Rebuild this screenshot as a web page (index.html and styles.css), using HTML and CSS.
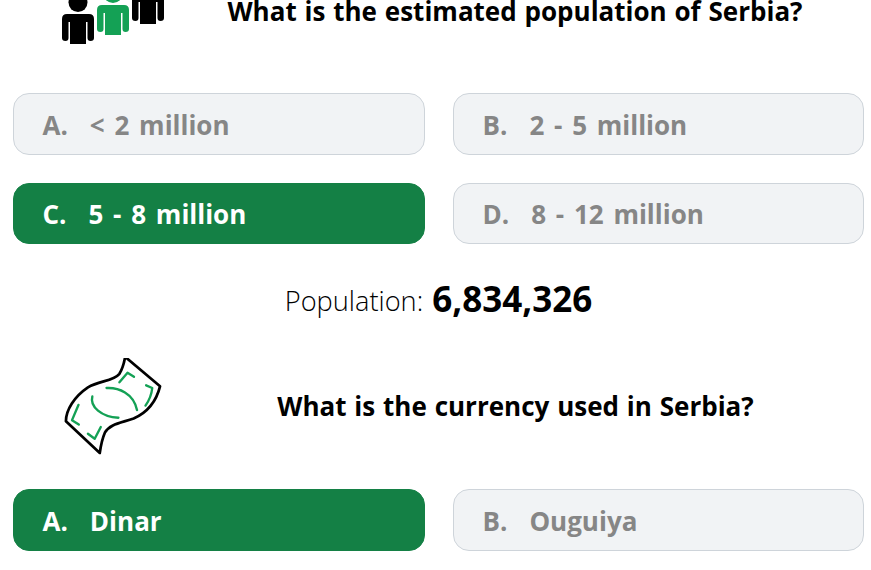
FILE: index.html
```html
<!DOCTYPE html>
<html lang="en">
<head>
<meta charset="utf-8">
<title>Serbia quiz</title>
<link rel="stylesheet" href="styles.css">
</head>
<body>
<main class="quiz">
  <section class="question">
    <div class="q-row q-row-first">
      <div class="q-icon">
        <svg width="104" height="96" viewBox="0 0 104 96">
          <defs>
            <path id="person" d="M0 5Q0 0 5 0H27Q32 0 32 5V24Q32 27 28.5 27Q25.5 27 25.5 24V8H24V30H8V8H6.5V24Q6.5 27 3.5 27Q0 27 0 24Z"/>
          </defs>
          <use href="#person" x="70" y="31" fill="#000"/>
          <circle cx="16" cy="39.5" r="9.5" fill="#000"/>
          <use href="#person" x="0" y="51" fill="#000"/>
          <circle cx="51" cy="30.5" r="9.5" fill="#14a155"/>
          <use href="#person" x="35" y="42" fill="#14a155"/>
        </svg>
      </div>
      <h2 class="q-text">What is the estimated population of Serbia?</h2>
    </div>
    <div class="options">
      <div class="option"><span class="letter">A.</span><span>&lt; 2 million</span></div>
      <div class="option"><span class="letter">B.</span><span>2 - 5 million</span></div>
      <div class="option correct"><span class="letter">C.</span><span>5 - 8 million</span></div>
      <div class="option"><span class="letter">D.</span><span>8 - 12 million</span></div>
    </div>
    <p class="answer">Population: <strong>6,834,326</strong></p>
  </section>
  <section class="question">
    <div class="q-row q-row-second">
      <div class="q-icon">
        <svg width="104" height="97" viewBox="0 0 104 97" fill="none" stroke-linecap="round" stroke-linejoin="round">
          <g transform="translate(-13 -14) scale(.3385)">
            <path d="M225 38L328 125C318 165 295 200 250 220C215 233 180 235 165 262C158 278 153 300 150 322L50 228C50 195 75 155 115 128C150 108 190 110 208 88C218 72 222 55 225 38Z" stroke="#000" stroke-width="8"/>
            <g stroke="#14a155" stroke-width="7">
              <path d="M170 130C205 128 250 145 260 195"/>
              <path d="M128 155C120 185 155 215 205 218"/>
              <path d="M208 113L232 85 251 97"/>
              <path d="M287 122L305 130C303 150 295 168 285 182"/>
              <path d="M87 180L68 225 88 238"/>
              <path d="M115 265L135 280 153 245"/>
            </g>
          </g>
        </svg>
      </div>
      <h2 class="q-text">What is the currency used in Serbia?</h2>
    </div>
    <div class="options">
      <div class="option correct"><span class="letter">A.</span><span>Dinar</span></div>
      <div class="option"><span class="letter">B.</span><span>Ouguiya</span></div>
    </div>
  </section>
</main>
</body>
</html>
```
FILE: styles.css
```css
html, body {
  margin: 0;
  height: 570px;
  overflow: hidden;
  background: #fff;
}
body {
  font-family: "Open Sans", "Noto Sans", sans-serif;
  color: #000;
}
.quiz {
  margin-top: -37px;
  padding: 0 7px 0 13px;
}
.q-row {
  display: flex;
  align-items: center;
  height: 96px;
}
.q-row-second {
  height: 97px;
}
.q-row-second .q-text {
  padding: 0 0 2px 1px;
}
.q-icon {
  width: 104px;
  padding-left: 49px;
  flex: none;
  align-self: flex-start;
}
.q-icon svg {
  display: block;
}
.q-text {
  flex: 1;
  margin: 0;
  text-align: center;
  font-size: 26px;
  font-weight: 700;
  line-height: 32px;
  word-spacing: 1.1px;
}
.options {
  display: grid;
  grid-template-columns: 412px 411px;
  grid-auto-rows: 61.5px;
  column-gap: 28px;
  row-gap: 28px;
  margin-top: 34px;
}
.option {
  display: flex;
  align-items: center;
  gap: 22px;
  box-sizing: border-box;
  padding: 2px 0 0 28.5px;
  border: 1px solid #ced4da;
  border-radius: 16px;
  background: #f1f3f5;
  color: #868686;
  font-size: 26px;
  font-weight: 700;
  word-spacing: 3px;
}
.option.correct {
  background: #148045;
  border-color: #148045;
  color: #fff;
}
.answer {
  margin: 31.5px 0 36.5px;
  text-align: center;
  font-size: 27.2px;
  font-weight: 300;
  line-height: 46px;
  height: 46px;
}
.answer strong {
  font-size: 35px;
  font-weight: 700;
  margin-left: 2px;
  vertical-align: -1px;
}
```
